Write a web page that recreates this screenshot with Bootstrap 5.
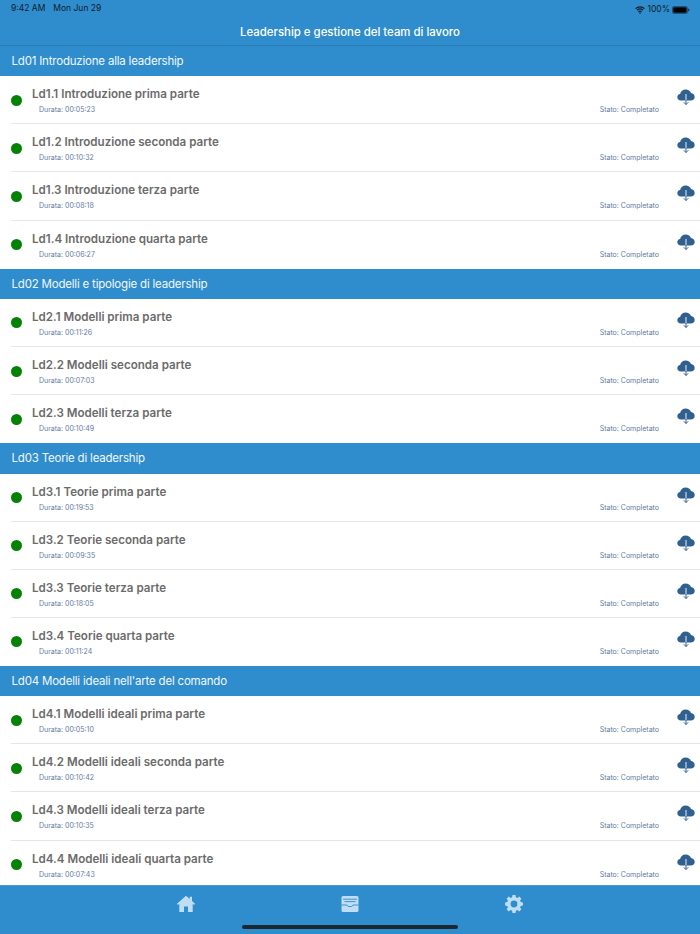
<!DOCTYPE html>
<html lang="it">
<head>
    <meta charset="UTF-8">
    <meta name="viewport" content="width=device-width, initial-scale=1.0">
    <title>Leadership e gestione del team di lavoro</title>
    <link href="https://cdn.jsdelivr.net/npm/bootstrap@5.3.0/dist/css/bootstrap.min.css" rel="stylesheet">
    <style>
        body { font-family: Inter, "Liberation Sans", sans-serif; background: #fff; }
        .app-shell { width: 700px; height: 934px; overflow: hidden; }
        .top-bar { background: #2f8dcd; height: 46px; border-bottom: 1px solid #2a7db6; }
        .status-line { height: 17px; padding: 2px 10px 0 11px; font-size: 8.5px; line-height: 13px; color: #10202c; }
        .status-right { gap: 2px; }
        .app-title { font-size: 11.4px; font-weight: 500; line-height: 30px; color: #fff; }
        .scroll-area { overflow: hidden; min-height: 0; }
        .section-head { background: #2f8dcd; height: 30.3px; padding-left: 11.5px; font-size: 11.5px; letter-spacing: -.2px; line-height: 31.5px; color: #f2f8fc; }
        .lesson-row { height: 48.1px; margin-left: 11px; border-bottom: 1px solid #e6e6e6; }
        .lesson-row.last-row { border-bottom: 0; }
        .green-dot { width: 11px; height: 11px; background: #058205; border-radius: 50%; margin-top: 18.5px; }
        .lesson-body { padding-left: 10px; padding-top: 10px; width: 649px; }
        .lesson-title { font-size: 11.6px; font-weight: 600; line-height: 16px; color: #6b6b6b; }
        .lesson-meta { padding: 3px 12px 0 7px; font-size: 7px; line-height: 10px; color: #5f7a9f; }
        .cloud-icon { width: 18px; height: 18px; margin: 12px 0 0 6px; }
        .tab-bar { background: #2f8dcd; height: 49px; border-top: 1px solid #4a9bd4; }
        .tab-icons { height: 35px; padding: 0 177px; }
        .tab-icon { width: 18px; height: 18px; }
        .home-line { width: 216px; height: 4px; border-radius: 2px; background: #1d2730; }
    </style>
</head>
<body>
    <svg width="0" height="0" class="d-block">
        <symbol id="cloud" viewBox="0 0 18 18">
            <path fill="#30608f" d="M4 12.5C1.8 12.5.3 11 .3 9.2c0-1.7 1.2-3 2.8-3.2C3.6 3.3 5.900 1.500 8.700 1.500c2.500 0 4.500 1.400 5.300 3.600 2.200.2 3.700 1.900 3.700 3.900 0 2-1.600 3.500-3.800 3.500z"/>
            <path fill="none" stroke="#fff" stroke-width=".9" d="M9 6v6.500"/>
            <path fill="none" stroke="#30608f" stroke-width="1" d="M9 12v4.500M6.800 14.300 9 16.500l2.200-2.200"/>
        </symbol>
    </svg>
    <div class="app-shell d-flex flex-column">
        <div class="top-bar flex-shrink-0">
            <div class="status-line d-flex justify-content-between">
                <div class="d-flex gap-2"><span>9:42 AM</span><span>Mon Jun 29</span></div>
                <div class="status-right d-flex align-items-center">
                    <svg width="10" height="8" viewBox="0 0 10 8"><path fill="none" stroke="#10202c" stroke-width="1.200" d="M.5 2.600C3 .4 7 .4 9.500 2.600M2 4.200C3.700 2.800 6.300 2.800 8 4.200M3.500 5.700c.9-.7 2.100-.7 3 0"/><path fill="#10202c" d="M5 8 3.900 6.800c.6-.5 1.600-.5 2.200 0z"/></svg>
                    <span>100%</span>
                    <svg width="18" height="8" viewBox="0 0 18 8"><rect x=".4" y=".4" width="15" height="7.200" rx="2" fill="none" stroke="#10202c" stroke-width=".6"/><rect x="1.200" y="1.200" width="13.400" height="5.600" rx="1.200" fill="#000"/><path fill="#10202c" d="M16.300 2.600c.7.200 1.100.7 1.100 1.400s-.4 1.200-1.100 1.400z"/></svg>
                </div>
            </div>
            <div class="app-title text-center">Leadership e gestione del team di lavoro</div>
        </div>

        <div class="scroll-area flex-grow-1">
            <div class="section-head">Ld01 Introduzione alla leadership</div>

            <div class="lesson-row d-flex">
                <div class="green-dot flex-shrink-0"></div>
                <div class="lesson-body">
                    <div class="lesson-title">Ld1.1 Introduzione prima parte</div>
                    <div class="lesson-meta d-flex justify-content-between"><span>Durata: 00:05:23</span><span>Stato: Completato</span></div>
                </div>
                <svg class="cloud-icon flex-shrink-0"><use href="#cloud"/></svg>
            </div>
            <div class="lesson-row d-flex">
                <div class="green-dot flex-shrink-0"></div>
                <div class="lesson-body">
                    <div class="lesson-title">Ld1.2 Introduzione seconda parte</div>
                    <div class="lesson-meta d-flex justify-content-between"><span>Durata: 00:10:32</span><span>Stato: Completato</span></div>
                </div>
                <svg class="cloud-icon flex-shrink-0"><use href="#cloud"/></svg>
            </div>
            <div class="lesson-row d-flex">
                <div class="green-dot flex-shrink-0"></div>
                <div class="lesson-body">
                    <div class="lesson-title">Ld1.3 Introduzione terza parte</div>
                    <div class="lesson-meta d-flex justify-content-between"><span>Durata: 00:08:18</span><span>Stato: Completato</span></div>
                </div>
                <svg class="cloud-icon flex-shrink-0"><use href="#cloud"/></svg>
            </div>
            <div class="lesson-row last-row d-flex">
                <div class="green-dot flex-shrink-0"></div>
                <div class="lesson-body">
                    <div class="lesson-title">Ld1.4 Introduzione quarta parte</div>
                    <div class="lesson-meta d-flex justify-content-between"><span>Durata: 00:06:27</span><span>Stato: Completato</span></div>
                </div>
                <svg class="cloud-icon flex-shrink-0"><use href="#cloud"/></svg>
            </div>

            <div class="section-head">Ld02 Modelli e tipologie di leadership</div>

            <div class="lesson-row d-flex">
                <div class="green-dot flex-shrink-0"></div>
                <div class="lesson-body">
                    <div class="lesson-title">Ld2.1 Modelli prima parte</div>
                    <div class="lesson-meta d-flex justify-content-between"><span>Durata: 00:11:26</span><span>Stato: Completato</span></div>
                </div>
                <svg class="cloud-icon flex-shrink-0"><use href="#cloud"/></svg>
            </div>
            <div class="lesson-row d-flex">
                <div class="green-dot flex-shrink-0"></div>
                <div class="lesson-body">
                    <div class="lesson-title">Ld2.2 Modelli seconda parte</div>
                    <div class="lesson-meta d-flex justify-content-between"><span>Durata: 00:07:03</span><span>Stato: Completato</span></div>
                </div>
                <svg class="cloud-icon flex-shrink-0"><use href="#cloud"/></svg>
            </div>
            <div class="lesson-row last-row d-flex">
                <div class="green-dot flex-shrink-0"></div>
                <div class="lesson-body">
                    <div class="lesson-title">Ld2.3 Modelli terza parte</div>
                    <div class="lesson-meta d-flex justify-content-between"><span>Durata: 00:10:49</span><span>Stato: Completato</span></div>
                </div>
                <svg class="cloud-icon flex-shrink-0"><use href="#cloud"/></svg>
            </div>

            <div class="section-head">Ld03 Teorie di leadership</div>

            <div class="lesson-row d-flex">
                <div class="green-dot flex-shrink-0"></div>
                <div class="lesson-body">
                    <div class="lesson-title">Ld3.1 Teorie prima parte</div>
                    <div class="lesson-meta d-flex justify-content-between"><span>Durata: 00:19:53</span><span>Stato: Completato</span></div>
                </div>
                <svg class="cloud-icon flex-shrink-0"><use href="#cloud"/></svg>
            </div>
            <div class="lesson-row d-flex">
                <div class="green-dot flex-shrink-0"></div>
                <div class="lesson-body">
                    <div class="lesson-title">Ld3.2 Teorie seconda parte</div>
                    <div class="lesson-meta d-flex justify-content-between"><span>Durata: 00:09:35</span><span>Stato: Completato</span></div>
                </div>
                <svg class="cloud-icon flex-shrink-0"><use href="#cloud"/></svg>
            </div>
            <div class="lesson-row d-flex">
                <div class="green-dot flex-shrink-0"></div>
                <div class="lesson-body">
                    <div class="lesson-title">Ld3.3 Teorie terza parte</div>
                    <div class="lesson-meta d-flex justify-content-between"><span>Durata: 00:18:05</span><span>Stato: Completato</span></div>
                </div>
                <svg class="cloud-icon flex-shrink-0"><use href="#cloud"/></svg>
            </div>
            <div class="lesson-row last-row d-flex">
                <div class="green-dot flex-shrink-0"></div>
                <div class="lesson-body">
                    <div class="lesson-title">Ld3.4 Teorie quarta parte</div>
                    <div class="lesson-meta d-flex justify-content-between"><span>Durata: 00:11:24</span><span>Stato: Completato</span></div>
                </div>
                <svg class="cloud-icon flex-shrink-0"><use href="#cloud"/></svg>
            </div>

            <div class="section-head">Ld04 Modelli ideali nell'arte del comando</div>

            <div class="lesson-row d-flex">
                <div class="green-dot flex-shrink-0"></div>
                <div class="lesson-body">
                    <div class="lesson-title">Ld4.1 Modelli ideali prima parte</div>
                    <div class="lesson-meta d-flex justify-content-between"><span>Durata: 00:05:10</span><span>Stato: Completato</span></div>
                </div>
                <svg class="cloud-icon flex-shrink-0"><use href="#cloud"/></svg>
            </div>
            <div class="lesson-row d-flex">
                <div class="green-dot flex-shrink-0"></div>
                <div class="lesson-body">
                    <div class="lesson-title">Ld4.2 Modelli ideali seconda parte</div>
                    <div class="lesson-meta d-flex justify-content-between"><span>Durata: 00:10:42</span><span>Stato: Completato</span></div>
                </div>
                <svg class="cloud-icon flex-shrink-0"><use href="#cloud"/></svg>
            </div>
            <div class="lesson-row d-flex">
                <div class="green-dot flex-shrink-0"></div>
                <div class="lesson-body">
                    <div class="lesson-title">Ld4.3 Modelli ideali terza parte</div>
                    <div class="lesson-meta d-flex justify-content-between"><span>Durata: 00:10:35</span><span>Stato: Completato</span></div>
                </div>
                <svg class="cloud-icon flex-shrink-0"><use href="#cloud"/></svg>
            </div>
            <div class="lesson-row last-row d-flex">
                <div class="green-dot flex-shrink-0"></div>
                <div class="lesson-body">
                    <div class="lesson-title">Ld4.4 Modelli ideali quarta parte</div>
                    <div class="lesson-meta d-flex justify-content-between"><span>Durata: 00:07:43</span><span>Stato: Completato</span></div>
                </div>
                <svg class="cloud-icon flex-shrink-0"><use href="#cloud"/></svg>
            </div>
        </div>

        <div class="tab-bar flex-shrink-0">
            <div class="tab-icons d-flex justify-content-between align-items-center">
                <svg class="tab-icon" viewBox="0 0 18 18"><path fill="#bfdef3" d="M9 .8 0 8.800l1 1.100 1.300-1.100V17h4.700v-5.500h4V17h4.700V8.800L17 9.900l1-1.100-3-2.700V1.700h-2.300v2.400z"/></svg>
                <svg class="tab-icon" viewBox="0 0 18 18"><path fill="#bfdef3" d="M2 1h14a1.500 1.500 0 0 1 1.500 1.500V15.500A1.500 1.500 0 0 1 16 17H2A1.500 1.500 0 0 1 .5 15.500V2.500A1.500 1.500 0 0 1 2 1z"/><path fill="none" stroke="#2f8dcd" stroke-width=".9" d="M2 4.200H16M3.500 6.600H14.500M.5 10H6l1.200 1.500h3.600L12 10h5.500"/></svg>
                <svg class="tab-icon" viewBox="0 0 18 18"><path fill="#bfdef3" fill-rule="evenodd" d="M7.500 1h3l.4 2.200 1.500.6 1.900-1.300 2.100 2.100-1.300 1.900.6 1.500L17.900 8.400v3l-2.200.4-.6 1.500 1.300 1.900-2.100 2.100-1.900-1.300-1.500.6-.4 2.200h-3l-.4-2.200-1.500-.6-1.900 1.300L1.600 15.200l1.300-1.900-.6-1.500L.1 11.400v-3l2.200-.4.6-1.500L1.600 4.600 3.700 2.500l1.900 1.300 1.500-.6zM9 6.500a3.400 3.400 0 1 0 0 6.800 3.400 3.400 0 0 0 0-6.800z" transform="translate(0 -.9)"/></svg>
            </div>
            <div class="home-line mx-auto mt-1"></div>
        </div>
    </div>
    <script src="https://cdn.jsdelivr.net/npm/bootstrap@5.3.0/dist/js/bootstrap.bundle.min.js"></script>
</body>
</html>
